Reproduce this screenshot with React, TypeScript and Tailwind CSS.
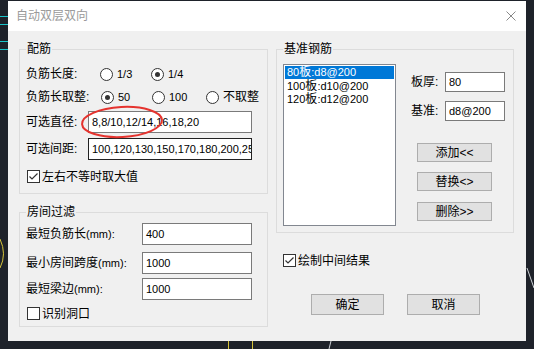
import React from "react";

const INPUT = "h-full bg-white border border-[#7a7a7a] pl-[3px] flex items-center text-[11px] text-black overflow-hidden whitespace-nowrap";
const BUTTON = "bg-[#e1e1e1] border border-[#adadad] flex items-center justify-center text-[12px] text-black";

function Radio({ checked, label, className = "" }: { checked?: boolean; label: React.ReactNode; className?: string }) {
  return (
    <div className={`flex items-center ${className}`}>
      <div className="w-[13px] h-[13px] rounded-full border border-[#333] bg-white flex items-center justify-center">
        {checked && <div className="w-[5px] h-[5px] rounded-full bg-[#333]" />}
      </div>
      <span className="ml-[4px]">{label}</span>
    </div>
  );
}

function Check({ checked, label }: { checked?: boolean; label: string }) {
  return (
    <div className="flex items-center h-[13px]">
      <div className="w-[13px] h-[13px] border border-[#333] bg-white flex items-center justify-center">
        {checked && (
          <svg width="11" height="11" viewBox="0 0 11 11">
            <polyline points="1.5,5.5 4,8 9.5,2.5" fill="none" stroke="#333" strokeWidth="1.2" />
          </svg>
        )}
      </div>
      <span className="ml-[2px]">{label}</span>
    </div>
  );
}

function Field({ label, value, labelW, inputW, mt, dark }: { label: React.ReactNode; value: string; labelW: string; inputW: string; mt: string; dark?: boolean }) {
  return (
    <div className={`flex items-center h-[22px] ${mt}`}>
      <div className={labelW}>{label}</div>
      <div className={`${inputW} ${INPUT} ${dark ? "!border-[#222]" : ""}`}>{value}</div>
    </div>
  );
}

const mm = <span className="text-[11px]">(mm):</span>;

export default function App() {
  return (
    <div className="relative w-[534px] h-[349px] overflow-hidden bg-[#1e222a] font-['Liberation_Sans','Noto_Sans_CJK_SC',sans-serif] text-[12px] text-black">
      {/* cad drawing behind the dialog */}
      <svg className="absolute inset-0" width="534" height="349">
        <g stroke="#19c3c8" strokeWidth="1">
          <line x1="0" y1="16.5" x2="8" y2="16.5" />
          <line x1="0" y1="24.5" x2="8" y2="24.5" />
          <line x1="0" y1="41.5" x2="8" y2="41.5" />
          <line x1="0" y1="49.5" x2="8" y2="49.5" />
        </g>
        <path d="M0 239 Q7 254 0 268" fill="none" stroke="#d6c33a" strokeWidth="1" />
        <line x1="228.5" y1="341" x2="228.5" y2="349" stroke="#d6c33a" />
        <line x1="252.5" y1="341" x2="252.5" y2="349" stroke="#d6c33a" />
        <line x1="331" y1="341" x2="329" y2="349" stroke="#cfd3d8" />
        <line x1="527" y1="268" x2="534" y2="288" stroke="#cfd3d8" />
      </svg>

      <div className="relative pl-[8px] pt-[1px]">
        <div className="w-[518px] h-[340px] flex flex-col bg-[#f0f0f0]">
          {/* title bar */}
          <div className="h-[30px] bg-white flex items-center justify-between pl-[8px] pr-[10px]">
            <span className="text-[#9a9a9a] text-[12px]">自动双层双向</span>
            <svg width="10" height="10" viewBox="0 0 10 10">
              <path d="M0.5 0.5 L9.5 9.5 M9.5 0.5 L0.5 9.5" stroke="#888" strokeWidth="1" />
            </svg>
          </div>

          <div className="flex gap-[8px] pl-[11px] pt-[10px]">
            {/* left column */}
            <div className="flex flex-col w-[249px]">
              <fieldset className="h-[153px] border border-[#dcdcdc] pl-[6px]">
                <legend className="px-[1px] leading-[16px]">配筋</legend>
                <div className="flex items-center h-[20px] mt-[7px]">
                  <div className="w-[74px]">负筋长度:</div>
                  <Radio className="w-[51px]" label={<span className="text-[11px]">1/3</span>} />
                  <Radio checked label={<span className="text-[11px]">1/4</span>} />
                </div>
                <div className="flex items-center h-[20px] mt-[3px]">
                  <div className="w-[75px]">负筋长取整:</div>
                  <Radio checked className="w-[51px]" label={<span className="text-[11px]">50</span>} />
                  <Radio className="w-[54px]" label={<span className="text-[11px]">100</span>} />
                  <Radio label="不取整" />
                </div>
                <Field label="可选直径:" value="8,8/10,12/14,16,18,20" labelW="w-[62px]" inputW="w-[164px]" mt="mt-[4px]" />
                <Field label="可选间距:" value="100,120,130,150,170,180,200,250" labelW="w-[62px]" inputW="w-[164px]" mt="mt-[5px]" dark />
                <div className="mt-[10px] ml-[1px]">
                  <Check checked label="左右不等时取大值" />
                </div>
              </fieldset>

              <fieldset className="h-[123px] mt-[10px] border border-[#dcdcdc] pl-[6px]">
                <legend className="px-[1px] leading-[16px]">房间过滤</legend>
                <Field label={<>最短负筋长{mm}</>} value="400" labelW="w-[116px]" inputW="w-[110px]" mt="mt-[3px]" />
                <Field label={<>最小房间跨度{mm}</>} value="1000" labelW="w-[116px]" inputW="w-[110px]" mt="mt-[7px]" />
                <Field label={<>最短梁边{mm}</>} value="1000" labelW="w-[116px]" inputW="w-[110px]" mt="mt-[4px]" />
                <div className="mt-[7px] ml-[1px]">
                  <Check label="识别洞口" />
                </div>
              </fieldset>
            </div>

            {/* right column */}
            <div className="flex flex-col w-[238px]">
              <fieldset className="h-[192px] border border-[#dcdcdc] pl-[6px]">
                <legend className="px-[1px] leading-[16px]">基准钢筋</legend>
                <div className="flex mt-[7px]">
                  <div className="w-[113px] h-[162px] bg-white border border-[#828790] p-[1px] text-[11px]">
                    <div className="h-[13px] leading-[13px] bg-[#0078d7] text-white pl-[2px]">
                      80<span className="text-[12px]">板</span>:d8@200
                    </div>
                    <div className="h-[13px] leading-[13px] pl-[2px] mt-[1px]">
                      100<span className="text-[12px]">板</span>:d10@200
                    </div>
                    <div className="h-[13px] leading-[13px] pl-[2px]">
                      120<span className="text-[12px]">板</span>:d12@200
                    </div>
                  </div>
                  <div className="flex flex-col ml-[15px]">
                    <div className="flex items-center h-[20px] mt-[8px]">
                      <div className="w-[34px]">板厚:</div>
                      <div className={`w-[60px] ${INPUT}`}>80</div>
                    </div>
                    <div className="flex items-center h-[20px] mt-[9px]">
                      <div className="w-[34px]">基准:</div>
                      <div className={`w-[60px] ${INPUT}`}>d8@200</div>
                    </div>
                    <div className={`${BUTTON} w-[75px] h-[19px] ml-[6px] mt-[22px]`}>添加&lt;&lt;</div>
                    <div className={`${BUTTON} w-[75px] h-[19px] ml-[6px] mt-[10px]`}>替换&lt;&gt;</div>
                    <div className={`${BUTTON} w-[75px] h-[19px] ml-[6px] mt-[11px]`}>删除&gt;&gt;</div>
                  </div>
                </div>
              </fieldset>

              <div className="mt-[21px] ml-[7px]">
                <Check checked label="绘制中间结果" />
              </div>

              <div className="flex gap-[23px] ml-[35px] mt-[27px]">
                <div className={`${BUTTON} w-[73px] h-[21px]`}>确定</div>
                <div className={`${BUTTON} w-[73px] h-[21px]`}>取消</div>
              </div>
            </div>
          </div>
        </div>
      </div>

      {/* red annotation ring */}
      <svg className="absolute left-0 top-0 pointer-events-none" width="534" height="349">
        <ellipse cx="122" cy="122" rx="40" ry="15" fill="none" stroke="#e5332e" strokeWidth="2" transform="rotate(-3 122 122)" />
      </svg>
    </div>
  );
}
